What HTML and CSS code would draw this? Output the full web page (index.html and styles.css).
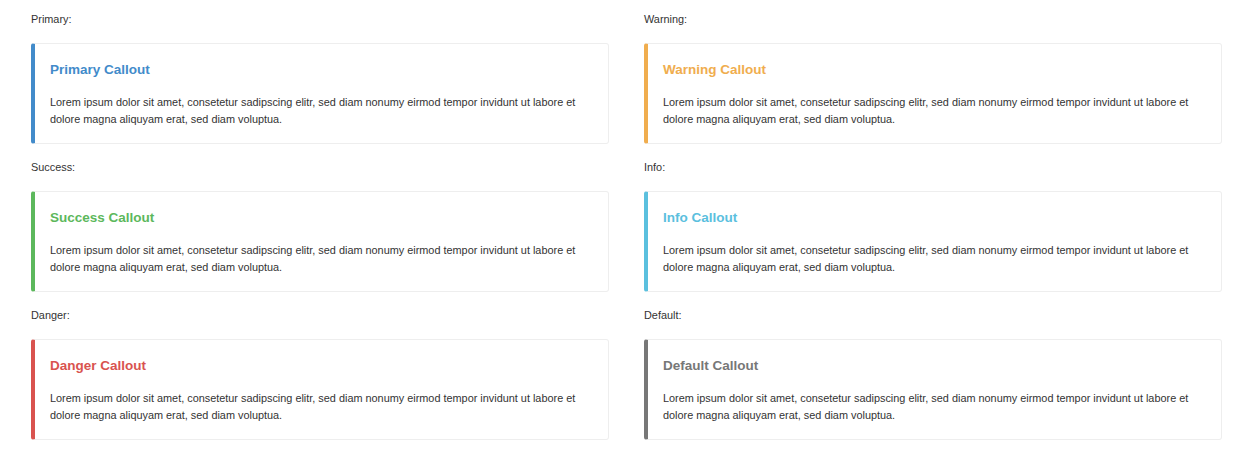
FILE: index.html
```html
<!DOCTYPE html>
<html>
<head>
<meta charset="utf-8">
<link rel="stylesheet" href="styles.css">
</head>
<body>
<div class="page">
  <div class="column">
    <section class="group">
      <div class="label">Primary:</div>
      <div class="callout callout-primary">
        <h4>Primary Callout</h4>
        <p>Lorem ipsum dolor sit amet, consetetur sadipscing elitr, sed diam nonumy eirmod tempor invidunt ut labore et dolore magna aliquyam erat, sed diam voluptua.</p>
      </div>
    </section>
    <section class="group">
      <div class="label">Success:</div>
      <div class="callout callout-success">
        <h4>Success Callout</h4>
        <p>Lorem ipsum dolor sit amet, consetetur sadipscing elitr, sed diam nonumy eirmod tempor invidunt ut labore et dolore magna aliquyam erat, sed diam voluptua.</p>
      </div>
    </section>
    <section class="group">
      <div class="label">Danger:</div>
      <div class="callout callout-danger">
        <h4>Danger Callout</h4>
        <p>Lorem ipsum dolor sit amet, consetetur sadipscing elitr, sed diam nonumy eirmod tempor invidunt ut labore et dolore magna aliquyam erat, sed diam voluptua.</p>
      </div>
    </section>
  </div>
  <div class="column">
    <section class="group">
      <div class="label">Warning:</div>
      <div class="callout callout-warning">
        <h4>Warning Callout</h4>
        <p>Lorem ipsum dolor sit amet, consetetur sadipscing elitr, sed diam nonumy eirmod tempor invidunt ut labore et dolore magna aliquyam erat, sed diam voluptua.</p>
      </div>
    </section>
    <section class="group">
      <div class="label">Info:</div>
      <div class="callout callout-info">
        <h4>Info Callout</h4>
        <p>Lorem ipsum dolor sit amet, consetetur sadipscing elitr, sed diam nonumy eirmod tempor invidunt ut labore et dolore magna aliquyam erat, sed diam voluptua.</p>
      </div>
    </section>
    <section class="group">
      <div class="label">Default:</div>
      <div class="callout callout-default">
        <h4>Default Callout</h4>
        <p>Lorem ipsum dolor sit amet, consetetur sadipscing elitr, sed diam nonumy eirmod tempor invidunt ut labore et dolore magna aliquyam erat, sed diam voluptua.</p>
      </div>
    </section>
  </div>
</div>
</body>
</html>
```

FILE: styles.css
```css
html, body {
  margin: 0;
  padding: 0;
  background: #fff;
}

body {
  font-family: "Liberation Sans", Arial, sans-serif;
  font-size: 10.88px;
  line-height: 17px;
  color: #333;
}

.page {
  display: grid;
  grid-template-columns: 578px 578px;
  column-gap: 35px;
  padding: 11px 15px 0 31px;
}

.column {
  display: flex;
  flex-direction: column;
}

.group {
  display: flex;
  flex-direction: column;
  gap: 15px;
  padding-bottom: 15px;
}

.label {
  height: 17px;
}

.callout {
  border: 1px solid #eee;
  border-left-width: 4px;
  border-radius: 3px;
  padding: 16px 15px 15px 15px;
  height: 101px;
  box-sizing: border-box;
}

.callout h4 {
  margin: 0 0 13.5px 0;
  font-size: 13.5px;
  line-height: 20px;
  font-weight: bold;
}

.callout p {
  margin: 0;
}

.callout-primary { border-left-color: #428bca; }
.callout-primary h4 { color: #428bca; }
.callout-success { border-left-color: #5cb85c; }
.callout-success h4 { color: #5cb85c; }
.callout-danger { border-left-color: #d9534f; }
.callout-danger h4 { color: #d9534f; }
.callout-warning { border-left-color: #f0ad4e; }
.callout-warning h4 { color: #f0ad4e; }
.callout-info { border-left-color: #5bc0de; }
.callout-info h4 { color: #5bc0de; }
.callout-default { border-left-color: #777; }
.callout-default h4 { color: #777; }
```
